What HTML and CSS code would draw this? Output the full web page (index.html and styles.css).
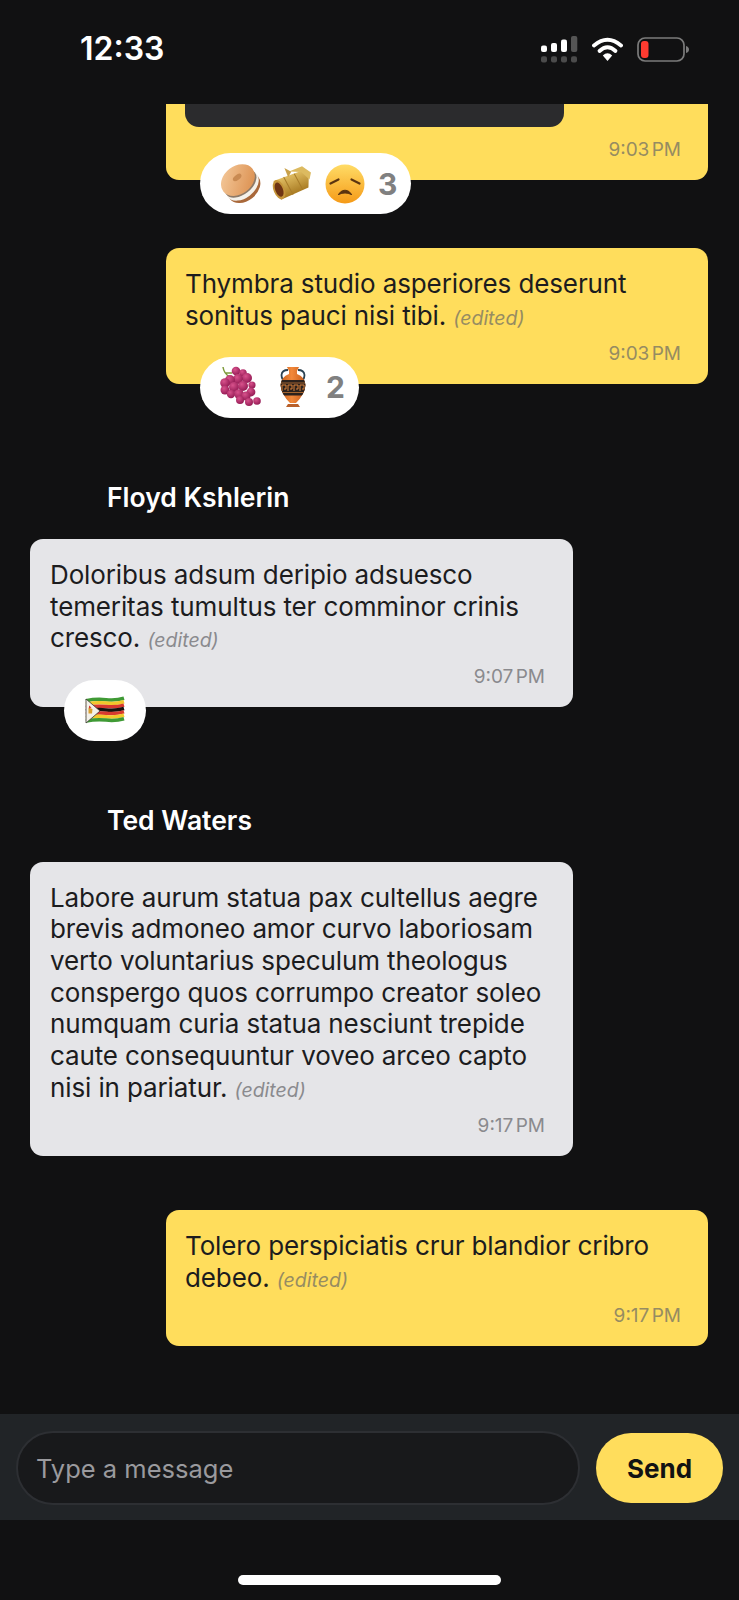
FILE: index.html
```html
<!DOCTYPE html>
<html lang="en">
<head>
  <meta charset="UTF-8">
  <meta name="viewport" content="width=device-width, initial-scale=1.0">
  <title>Chat</title>
  <link rel="stylesheet" href="styles.css">
</head>
<body>
  <svg class="defs" width="0" height="0">
    <defs>
      <linearGradient id="faceFill" x1="0" y1="0" x2="0" y2="1">
        <stop offset="0" stop-color="#ffdc66"/>
        <stop offset="1" stop-color="#f59a17"/>
      </linearGradient>
      <linearGradient id="bagelFill" x1="0" y1="0" x2="1" y2="1">
        <stop offset="0" stop-color="#f6cda0"/>
        <stop offset="1" stop-color="#d98a48"/>
      </linearGradient>
      <linearGradient id="wrapFill" x1="0" y1="0" x2="0" y2="1">
        <stop offset="0" stop-color="#e0bd62"/>
        <stop offset="1" stop-color="#a87a22"/>
      </linearGradient>
      <linearGradient id="vaseFill" x1="0" y1="0" x2="1" y2="0">
        <stop offset="0" stop-color="#c9601c"/>
        <stop offset=".45" stop-color="#f2883a"/>
        <stop offset="1" stop-color="#c55a1a"/>
      </linearGradient>
      <radialGradient id="grapeFill" cx=".38" cy=".32" r=".75">
        <stop offset="0" stop-color="#d8528c"/>
        <stop offset="1" stop-color="#8f1650"/>
      </radialGradient>
      <clipPath id="vaseClip">
        <path d="M15 1 H27 L25 5 V8 Q33 11 33.500 19 Q33 28 24 37 H18 Q9 28 8.500 19 Q9 11 17 8 V5 Z"/>
      </clipPath>
      <symbol id="bagel" viewBox="0 0 42 42">
        <g transform="rotate(-38 21 21)">
          <ellipse cx="21" cy="26" rx="18" ry="13" fill="#a9683a"/>
          <ellipse cx="21" cy="23" rx="18.500" ry="12.500" fill="#f4f1ea"/>
          <ellipse cx="21" cy="20.500" rx="18" ry="11" fill="#8d7a68"/>
          <ellipse cx="21" cy="16" rx="18.500" ry="14" fill="url(#bagelFill)"/>
          <ellipse cx="22" cy="13.500" rx="5" ry="2.600" fill="#c98a52"/>
        </g>
      </symbol>
      <symbol id="tamale" viewBox="0 0 42 42">
        <g transform="rotate(-22 21 21)">
          <path d="M4 11 L34 12 L38 21 L34 30 L4 31 Z" fill="url(#wrapFill)"/>
          <path d="M22 8 L36 8 L42 17 L38 23 L33 13 Z" fill="#dcba60"/>
          <path d="M19 3 L24 9 L19 13 Z" fill="#c9a14a"/>
          <ellipse cx="6" cy="21" rx="5.500" ry="10" fill="#c5953a"/>
          <ellipse cx="6" cy="21" rx="3.800" ry="7.500" fill="#6e3414"/>
          <path d="M15 11 L17 31 M26 12 L28 30" stroke="#a87c2a" stroke-width="1" fill="none"/>
        </g>
      </symbol>
      <symbol id="sad" viewBox="0 0 42 42">
        <circle cx="21" cy="21" r="19.500" fill="url(#faceFill)"/>
        <path d="M6.500 20.500 L14.500 16.500 M35.500 20.500 L27.500 16.500" stroke="#5b3410" stroke-width="2.200" stroke-linecap="round" fill="none"/>
        <path d="M14.500 31.500 Q21 23 27.500 31.500 Q21 28.500 14.500 31.500 Z" fill="#5b3410" stroke="#5b3410" stroke-width="1.200" stroke-linejoin="round"/>
      </symbol>
      <symbol id="grapes" viewBox="0 0 42 42">
        <path d="M3 1 Q4 8 10 11 M5 7 L12 7" stroke="#7e9a3c" stroke-width="1.500" fill="none"/>
        <g fill="url(#grapeFill)">
          <circle cx="16" cy="5" r="4.300"/>
          <circle cx="23" cy="7" r="3.800"/>
          <circle cx="27" cy="12" r="5"/>
          <circle cx="18" cy="13" r="5"/>
          <circle cx="10" cy="14" r="5"/>
          <circle cx="5" cy="17" r="4.800"/>
          <circle cx="32" cy="19" r="3.600"/>
          <circle cx="5" cy="24" r="4.500"/>
          <circle cx="14" cy="21" r="5"/>
          <circle cx="23" cy="20" r="5"/>
          <circle cx="31" cy="26" r="4.400"/>
          <circle cx="11" cy="28" r="4.200"/>
          <circle cx="19" cy="28" r="4.800"/>
          <circle cx="26" cy="30" r="4.600"/>
          <circle cx="20" cy="34" r="4"/>
          <circle cx="29" cy="36" r="4"/>
          <circle cx="37" cy="35" r="3.800"/>
        </g>
      </symbol>
      <symbol id="amphora" viewBox="0 0 42 42">
        <path d="M16 4 Q10 4 9.500 9 Q9.500 12 11 14 M26 4 Q32 4 32.500 9 Q32.500 12 31 14" stroke="#2b4252" stroke-width="1.800" fill="none"/>
        <path d="M15 1 H27 L25 5 V8 Q33 11 33.500 19 Q33 28 24 37 H18 Q9 28 8.500 19 Q9 11 17 8 V5 Z" fill="url(#vaseFill)"/>
        <g clip-path="url(#vaseClip)">
          <rect x="8" y="14" width="26" height="15.500" fill="#2c211c"/>
          <path d="M8 17 H34 M8 26.500 H34" stroke="#d9823a" stroke-width=".7"/>
          <path d="M10 25 V19 H14 V23 H12 M16 25 V19 H20 V23 H18 M22 25 V19 H26 V23 H24 M28 25 V19 H32 V23 H30" stroke="#d9823a" stroke-width="1" fill="none"/>
        </g>
        <path d="M16 38 H26 L28 41 H14 Z" fill="#b9602a"/>
      </symbol>
      <symbol id="zimbabwe" viewBox="0 0 42 42">
        <g fill="none" stroke-width="3.500">
          <path d="M2 11.700 Q12 9.700 22 10.700 T40 9.300" stroke="#3f9a35"/>
          <path d="M2 15.100 Q12 13.100 22 14.100 T40 12.700" stroke="#f2c82c"/>
          <path d="M2 18.500 Q12 16.500 22 17.500 T40 16.100" stroke="#d8392f"/>
          <path d="M2 21.900 Q12 19.900 22 20.900 T40 19.500" stroke="#17130f"/>
          <path d="M2 25.300 Q12 23.300 22 24.300 T40 22.900" stroke="#d8392f"/>
          <path d="M2 28.700 Q12 26.700 22 27.700 T40 26.300" stroke="#f2c82c"/>
          <path d="M2 32.100 Q12 30.100 22 31.100 T40 29.700" stroke="#3f9a35"/>
        </g>
        <path d="M2 10 L16 22 L2 34 Z" fill="#f4f1ea" stroke="#3a362e" stroke-width=".8"/>
        <path d="M4.500 18.500 L8.500 20 L8 24.500 L4.500 24.500 Z" fill="#d9a030"/>
        <path d="M5 16.500 L7.500 18.500 L5 19.500 Z" fill="#d8392f"/>
      </symbol>
    </defs>
  </svg>

  <div class="phone">
    <header class="status-bar">
      <span class="clock">12:33</span>
      <div class="status-icons">
        <svg class="icon-signal" width="38" height="28" viewBox="0 0 38 28">
          <rect x="1" y="9.500" width="6" height="6.500" rx="2" fill="#fff"/>
          <rect x="11" y="7" width="6" height="9" rx="2" fill="#fff"/>
          <rect x="21" y="3.500" width="6" height="12.500" rx="2" fill="#fff"/>
          <rect x="31" y="0" width="6.300" height="16" rx="2" fill="#555"/>
          <rect x="1" y="20.300" width="6" height="6.300" rx="2" fill="#4b4b4b"/>
          <rect x="11" y="20.300" width="6" height="6.300" rx="2" fill="#4b4b4b"/>
          <rect x="21" y="20.300" width="6" height="6.300" rx="2" fill="#4b4b4b"/>
          <rect x="31" y="20.300" width="6" height="6.300" rx="2" fill="#4b4b4b"/>
        </svg>
        <svg class="icon-wifi" width="31" height="24" viewBox="0 0 31 24">
          <path d="M2 8.500 Q15.500 -3 29 8.500" fill="none" stroke="#fff" stroke-width="3.800" stroke-linecap="round"/>
          <path d="M7.500 14 Q15.500 6.500 23.500 14" fill="none" stroke="#fff" stroke-width="3.800" stroke-linecap="round"/>
          <path d="M10.800 18.500 Q15.500 13.800 20.200 18.500 L15.500 24 Z" fill="#fff"/>
        </svg>
        <svg class="icon-battery" width="52" height="25" viewBox="0 0 52 25">
          <rect x="1" y="1" width="46" height="23" rx="7" fill="none" stroke="#7b7b7b" stroke-width="1.700"/>
          <rect x="4" y="4" width="7.500" height="17" rx="3" fill="#ff3b30"/>
          <path d="M49 9 Q52 10 52 12.500 Q52 15 49 16 Z" fill="#7b7b7b"/>
        </svg>
      </div>
    </header>

    <main class="chat">
      <div class="msg msg-out msg-clipped">
        <div class="bubble bubble-out bubble-clipped">
          <div class="attachment"></div>
          <div class="time">9:03 PM</div>
        </div>
        <div class="reactions">
          <svg class="emoji"><use href="#bagel"/></svg>
          <svg class="emoji"><use href="#tamale"/></svg>
          <svg class="emoji"><use href="#sad"/></svg>
          <span class="count">3</span>
        </div>
      </div>

      <div class="msg msg-out">
        <div class="bubble bubble-out">
          <p class="text">Thymbra studio asperiores deserunt sonitus pauci nisi tibi. <em class="edited">(edited)</em></p>
          <div class="time">9:03 PM</div>
        </div>
        <div class="reactions">
          <svg class="emoji"><use href="#grapes"/></svg>
          <svg class="emoji"><use href="#amphora"/></svg>
          <span class="count">2</span>
        </div>
      </div>

      <div class="sender">Floyd Kshlerin</div>
      <div class="msg msg-in">
        <div class="bubble bubble-in">
          <p class="text">Doloribus adsum deripio adsuesco temeritas tumultus ter comminor crinis cresco. <em class="edited">(edited)</em></p>
          <div class="time">9:07 PM</div>
        </div>
        <div class="reactions reactions-in">
          <svg class="emoji"><use href="#zimbabwe"/></svg>
        </div>
      </div>

      <div class="sender">Ted Waters</div>
      <div class="msg msg-in">
        <div class="bubble bubble-in">
          <p class="text">Labore aurum statua pax cultellus aegre brevis admoneo amor curvo laboriosam verto voluntarius speculum theologus conspergo quos corrumpo creator soleo numquam curia statua nesciunt trepide caute consequuntur voveo arceo capto nisi in pariatur. <em class="edited">(edited)</em></p>
          <div class="time">9:17 PM</div>
        </div>
      </div>

      <div class="msg msg-out msg-last">
        <div class="bubble bubble-out">
          <p class="text">Tolero perspiciatis crur blandior cribro debeo. <em class="edited">(edited)</em></p>
          <div class="time">9:17 PM</div>
        </div>
      </div>
    </main>

    <form class="composer">
      <div class="field">Type a message</div>
      <div class="send">Send</div>
    </form>

    <footer class="home-area">
      <div class="home-bar"></div>
    </footer>
  </div>
</body>
</html>
```

FILE: styles.css
```css
* {
  box-sizing: border-box;
}

html,
body {
  margin: 0;
  background-color: #111112;
}

.defs {
  position: absolute;
}

.phone {
  width: 739px;
  height: 1600px;
  display: flex;
  flex-direction: column;
  overflow: hidden;
  font-family: Inter, "Liberation Sans", sans-serif;
  background-color: #111112;
}

/* status bar */
.status-bar {
  height: 104px;
  flex: none;
  display: flex;
  justify-content: space-between;
  align-items: flex-start;
  padding: 30px 50px 0 80px;
  color: #fff;
}

.clock {
  font-size: 32px;
  line-height: 38px;
  font-weight: 600;
}

.status-icons {
  display: flex;
  align-items: flex-start;
  gap: 14px;
  padding-top: 6px;
}

.icon-wifi {
  margin-top: 1px;
}

.icon-battery {
  margin-top: 1px;
}

/* messages */
.chat {
  height: 1310px;
  flex: none;
  overflow: hidden;
}

.msg {
  width: 542px;
  margin-bottom: 34px;
}

.msg-out {
  margin-left: 166px;
}

.msg-in {
  width: 543px;
  margin-left: 30px;
}

.msg-last {
  width: 542px;
  margin-left: 166px;
  margin-top: 54px;
}

.bubble {
  padding: 20px 27px 19px 19px;
  border-radius: 13px;
}

.bubble-out {
  background-color: #ffdd5c;
}

.bubble-in {
  padding-left: 20px;
  padding-right: 28px;
  background-color: #e5e5e8;
}

.bubble-clipped {
  height: 76px;
  padding-top: 0;
  border-top-left-radius: 0;
  border-top-right-radius: 0;
}

.attachment {
  width: 379px;
  height: 23px;
  background-color: #2b2b2d;
  border-radius: 0 0 14px 14px;
}

.text {
  margin: 0;
  font-size: 26px;
  line-height: 31.700px;
  letter-spacing: -0.12px;
  color: #1c1c1e;
}

.edited {
  font-size: 19.500px;
  line-height: 1;
  letter-spacing: 0;
  color: #8a8a8e;
}

.bubble-out .edited,
.bubble-out .time {
  color: #968c62;
}

.time {
  margin-top: 11.500px;
  font-size: 19px;
  line-height: 22px;
  word-spacing: -3px;
  text-align: right;
  color: #8a8a8e;
}

.bubble-clipped .time {
  margin-top: 12px;
}

.sender {
  margin: 63px 0 26px 107px;
  font-size: 26.500px;
  line-height: 32px;
  font-weight: 600;
  color: #fff;
}

.reactions {
  display: inline-flex;
  align-items: center;
  gap: 10px;
  height: 61px;
  margin: -27px 0 0 34px;
  padding: 0 14px 0 20px;
  border-radius: 31px;
  background-color: #fff;
  vertical-align: top;
}

.reactions-in {
  padding-right: 20px;
}

.emoji {
  width: 42px;
  height: 42px;
  flex: none;
}

.count {
  margin-left: 2px;
  font-size: 30px;
  line-height: 36px;
  font-weight: 700;
  color: #808080;
}

/* composer */
.composer {
  height: 106px;
  flex: none;
  display: flex;
  align-items: center;
  gap: 16px;
  margin: 0;
  padding: 2px 16px 0;
  background-color: #212427;
}

.field {
  flex: 1;
  height: 74px;
  padding-left: 18px;
  display: flex;
  align-items: center;
  border: 2px solid #2d2f33;
  border-radius: 37px;
  background-color: #18191b;
  font-size: 25.500px;
  color: #9a9a9e;
}

.send {
  width: 127px;
  height: 70px;
  display: flex;
  align-items: center;
  justify-content: center;
  border-radius: 35px;
  background-color: #ffdd5c;
  font-size: 26px;
  font-weight: 700;
  color: #111213;
}

/* home indicator */
.home-area {
  flex: 1;
  display: flex;
  justify-content: center;
  padding-top: 55px;
}

.home-bar {
  width: 263px;
  height: 10px;
  border-radius: 5px;
  background-color: #fff;
}
```
